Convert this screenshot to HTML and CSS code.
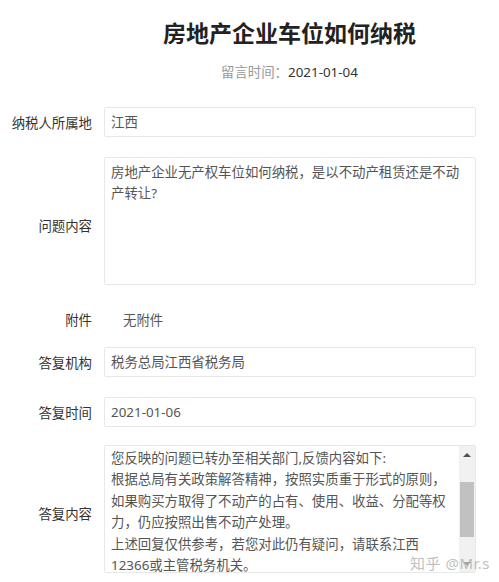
FILE: index.html
```html
<!DOCTYPE html>
<html lang="zh-CN">
<head>
    <meta charset="UTF-8">
    <meta name="viewport" content="width=device-width, initial-scale=1.0">
    <title>房地产企业车位如何纳税</title>
    <link rel="stylesheet" href="styles.css">
</head>
<body>
    <div class="page">
        <!-- Header -->
        <div class="header">
            <h1 class="title">房地产企业车位如何纳税</h1>
            <div class="meta"><span class="meta-label">留言时间：</span>2021-01-04</div>
        </div>

        <!-- Form -->
        <div class="form">
            <div class="form-row">
                <div class="label">纳税人所属地</div>
                <div class="field">江西</div>
            </div>
            <div class="form-row row-area">
                <div class="label label-area">问题内容</div>
                <div class="field field-area">房地产企业无产权车位如何纳税，是以不动产租赁还是不动产转让?</div>
            </div>
            <div class="form-row row-plain">
                <div class="label">附件</div>
                <div class="plain">无附件</div>
            </div>
            <div class="form-row row-org">
                <div class="label">答复机构</div>
                <div class="field">税务总局江西省税务局</div>
            </div>
            <div class="form-row">
                <div class="label">答复时间</div>
                <div class="field">2021-01-06</div>
            </div>
            <div class="form-row row-answer">
                <div class="label label-area">答复内容</div>
                <div class="field field-area field-scroll">
                    <div class="scroll-text">您反映的问题已转办至相关部门,反馈内容如下:<br>根据总局有关政策解答精神，按照实质重于形式的原则，如果购买方取得了不动产的占有、使用、收益、分配等权力，仍应按照出售不动产处理。<br>上述回复仅供参考，若您对此仍有疑问，请联系江西12366或主管税务机关。</div>
                    <div class="scrollbar">
                        <div class="sb-btn sb-up"></div>
                        <div class="sb-track">
                            <div class="sb-thumb"></div>
                        </div>
                        <div class="sb-btn sb-down"></div>
                    </div>
                </div>
            </div>
        </div>

        <div class="watermark">知乎 @Mr.s</div>
    </div>
</body>
</html>
```

FILE: styles.css
```css
body {
    font-family: "Noto Sans", "Noto Sans CJK SC", sans-serif;
    background-color: white;
    color: #333;
    margin: 0;
    font-size: 13.4px;
}

.page {
    position: relative;
    width: 499px;
    height: 582px;
    overflow: hidden;
}

/* Header */
.header {
    padding: 17px 0 0 80px;
    text-align: center;
}

.title {
    margin: 0;
    font-size: 23px;
    line-height: 32px;
    font-weight: bold;
    color: #222;
}

.meta {
    margin-top: 13px;
    line-height: 20px;
    color: #333;
}

.meta-label {
    color: #999;
}

/* Form */
.form {
    margin-top: 25px;
}

.form-row {
    display: grid;
    grid-template-columns: 92px 372px;
    column-gap: 12px;
    align-items: center;
    margin-top: 20px;
}

.form-row:first-child {
    margin-top: 0;
}

.label {
    text-align: right;
    white-space: nowrap;
    color: #333;
}

.label-area {
    padding-top: 8px;
}

.field {
    box-sizing: border-box;
    height: 30px;
    line-height: 28px;
    padding: 0 6px;
    border: 1px solid #e8e8e8;
    border-radius: 2px;
    color: #555;
    background: white;
}

.field-area {
    height: 128px;
    line-height: 21.4px;
    padding: 4px 6px;
}

.row-plain {
    margin-top: 24px;
}

.row-plain .label,
.plain {
    line-height: 22px;
}

.plain {
    padding-left: 19px;
    color: #555;
}

.row-org {
    margin-top: 16px;
}

.row-answer {
    margin-top: 18px;
}

.field-scroll {
    display: flex;
    padding: 2px 0 0 6px;
}

.scroll-text {
    flex: 1;
    padding-right: 4px;
}

/* Scrollbar */
.scrollbar {
    width: 16px;
    margin-top: -2px;
    display: flex;
    flex-direction: column;
    background: #f1f1f1;
}

.sb-btn {
    height: 17px;
    display: flex;
    align-items: center;
    justify-content: center;
}

.sb-btn::after {
    content: "";
    border-left: 4px solid transparent;
    border-right: 4px solid transparent;
}

.sb-up::after {
    border-bottom: 4px solid #505050;
}

.sb-down::after {
    border-top: 4px solid #a3a3a3;
}

.sb-track {
    flex: 1;
    padding-top: 19px;
}

.sb-thumb {
    height: 55px;
    margin: 0 1px;
    background: #c1c1c1;
}

/* Watermark */
.watermark {
    position: absolute;
    left: 410px;
    top: 553px;
    font-size: 15px;
    line-height: 20px;
    color: rgba(170, 170, 170, 0.75);
    letter-spacing: 0.5px;
    white-space: nowrap;
}
```
